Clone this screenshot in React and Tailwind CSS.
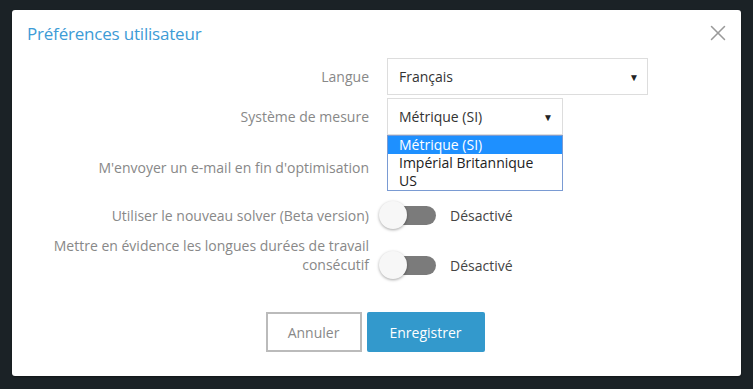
import { X } from "lucide-react";

const Toggle = () => (
    <div className="flex items-center">
        <div className="relative w-[57px] h-[30px] ml-[-8px]">
            <div className="absolute left-[11px] right-0 top-[6px] h-[19px] rounded-full bg-[#7b7b7b]"></div>
            <div className="absolute left-0 top-[1px] h-[28px] w-[28px] rounded-full bg-[#f7f7f7] shadow-[0_1px_3px_rgba(0,0,0,0.35)]"></div>
        </div>
        <span className="ml-[14px] text-[14px] text-[#444]">Désactivé</span>
    </div>
);

const Caret = () => <span className="text-[10px] text-[#222] leading-none">▼</span>;

const App = () => {
    return (
        <div className="w-[753px] h-[389px] bg-[#1b2226] pt-[10px] pl-[12px] overflow-hidden" style={{ fontFamily: '"Open Sans", "Noto Sans", sans-serif' }}>
            <div className="w-[729px] h-[366px] bg-white rounded-[3px] shadow-[0_1px_2px_rgba(0,0,0,0.4)] flex flex-col">
                <div className="h-[48px] flex items-start justify-between pl-[15px] pr-[10px] pt-[12px]">
                    <h2 className="text-[17px] leading-[24px] text-[#3d9bd6] tracking-[-0.2px]">Préférences utilisateur</h2>
                    <X className="mt-[-2px] text-[#9a9a9a]" size={26} strokeWidth={1.4} />
                </div>

                <div className="grid grid-cols-[357px_1fr] gap-x-[18px] text-[14px]">
                    <label className="h-[37px] flex items-center justify-end text-[#888]">Langue</label>
                    <div className="w-[261px] h-[37px] border border-[#ddd] flex items-center justify-between pl-[11px] pr-[8px] text-[#333]">
                        <span>Français</span>
                        <Caret />
                    </div>

                    <label className="mt-[3px] h-[37px] flex items-center justify-end text-[#888]">Système de mesure</label>
                    <div className="mt-[3px] relative w-[176px] h-[37px]">
                        <div className="h-[37px] border border-[#ddd] flex items-center justify-between pl-[11px] pr-[9px] text-[#333]">
                            <span>Métrique (SI)</span>
                            <Caret />
                        </div>
                        <ul className="absolute z-10 left-0 top-[37px] w-[176px] bg-white border border-[#7a9bd3] text-[#222] leading-[18px]">
                            <li className="pl-[11px] bg-[#1e90ff] text-white">Métrique (SI)</li>
                            <li className="pl-[11px]">Impérial Britannique</li>
                            <li className="pl-[11px]">US</li>
                        </ul>
                    </div>

                    <label className="mt-[14px] h-[37px] flex items-center justify-end text-[#888]">M'envoyer un e-mail en fin d'optimisation</label>
                    <div className="mt-[14px] h-[37px]"></div>

                    <label className="mt-[14px] h-[30px] flex items-center justify-end text-[#888]">Utiliser le nouveau solver (Beta version)</label>
                    <div className="mt-[14px] h-[30px]"><Toggle /></div>

                    <label className="mt-[6px] text-right leading-[19px] text-[#888]">Mettre en évidence les longues durées de travail<br />consécutif</label>
                    <div className="mt-[6px] pt-[14px]"><Toggle /></div>
                </div>

                <div className="mt-[32px] flex justify-center gap-[5px] pr-[3px]">
                    <button className="w-[96px] h-[40px] border-2 border-[#bbb] text-[14px] text-[#888] bg-white">Annuler</button>
                    <button className="w-[118px] h-[40px] rounded-[2px] bg-[#3399cc] text-[14px] text-white">Enregistrer</button>
                </div>
            </div>
        </div>
    );
};

export default App;
